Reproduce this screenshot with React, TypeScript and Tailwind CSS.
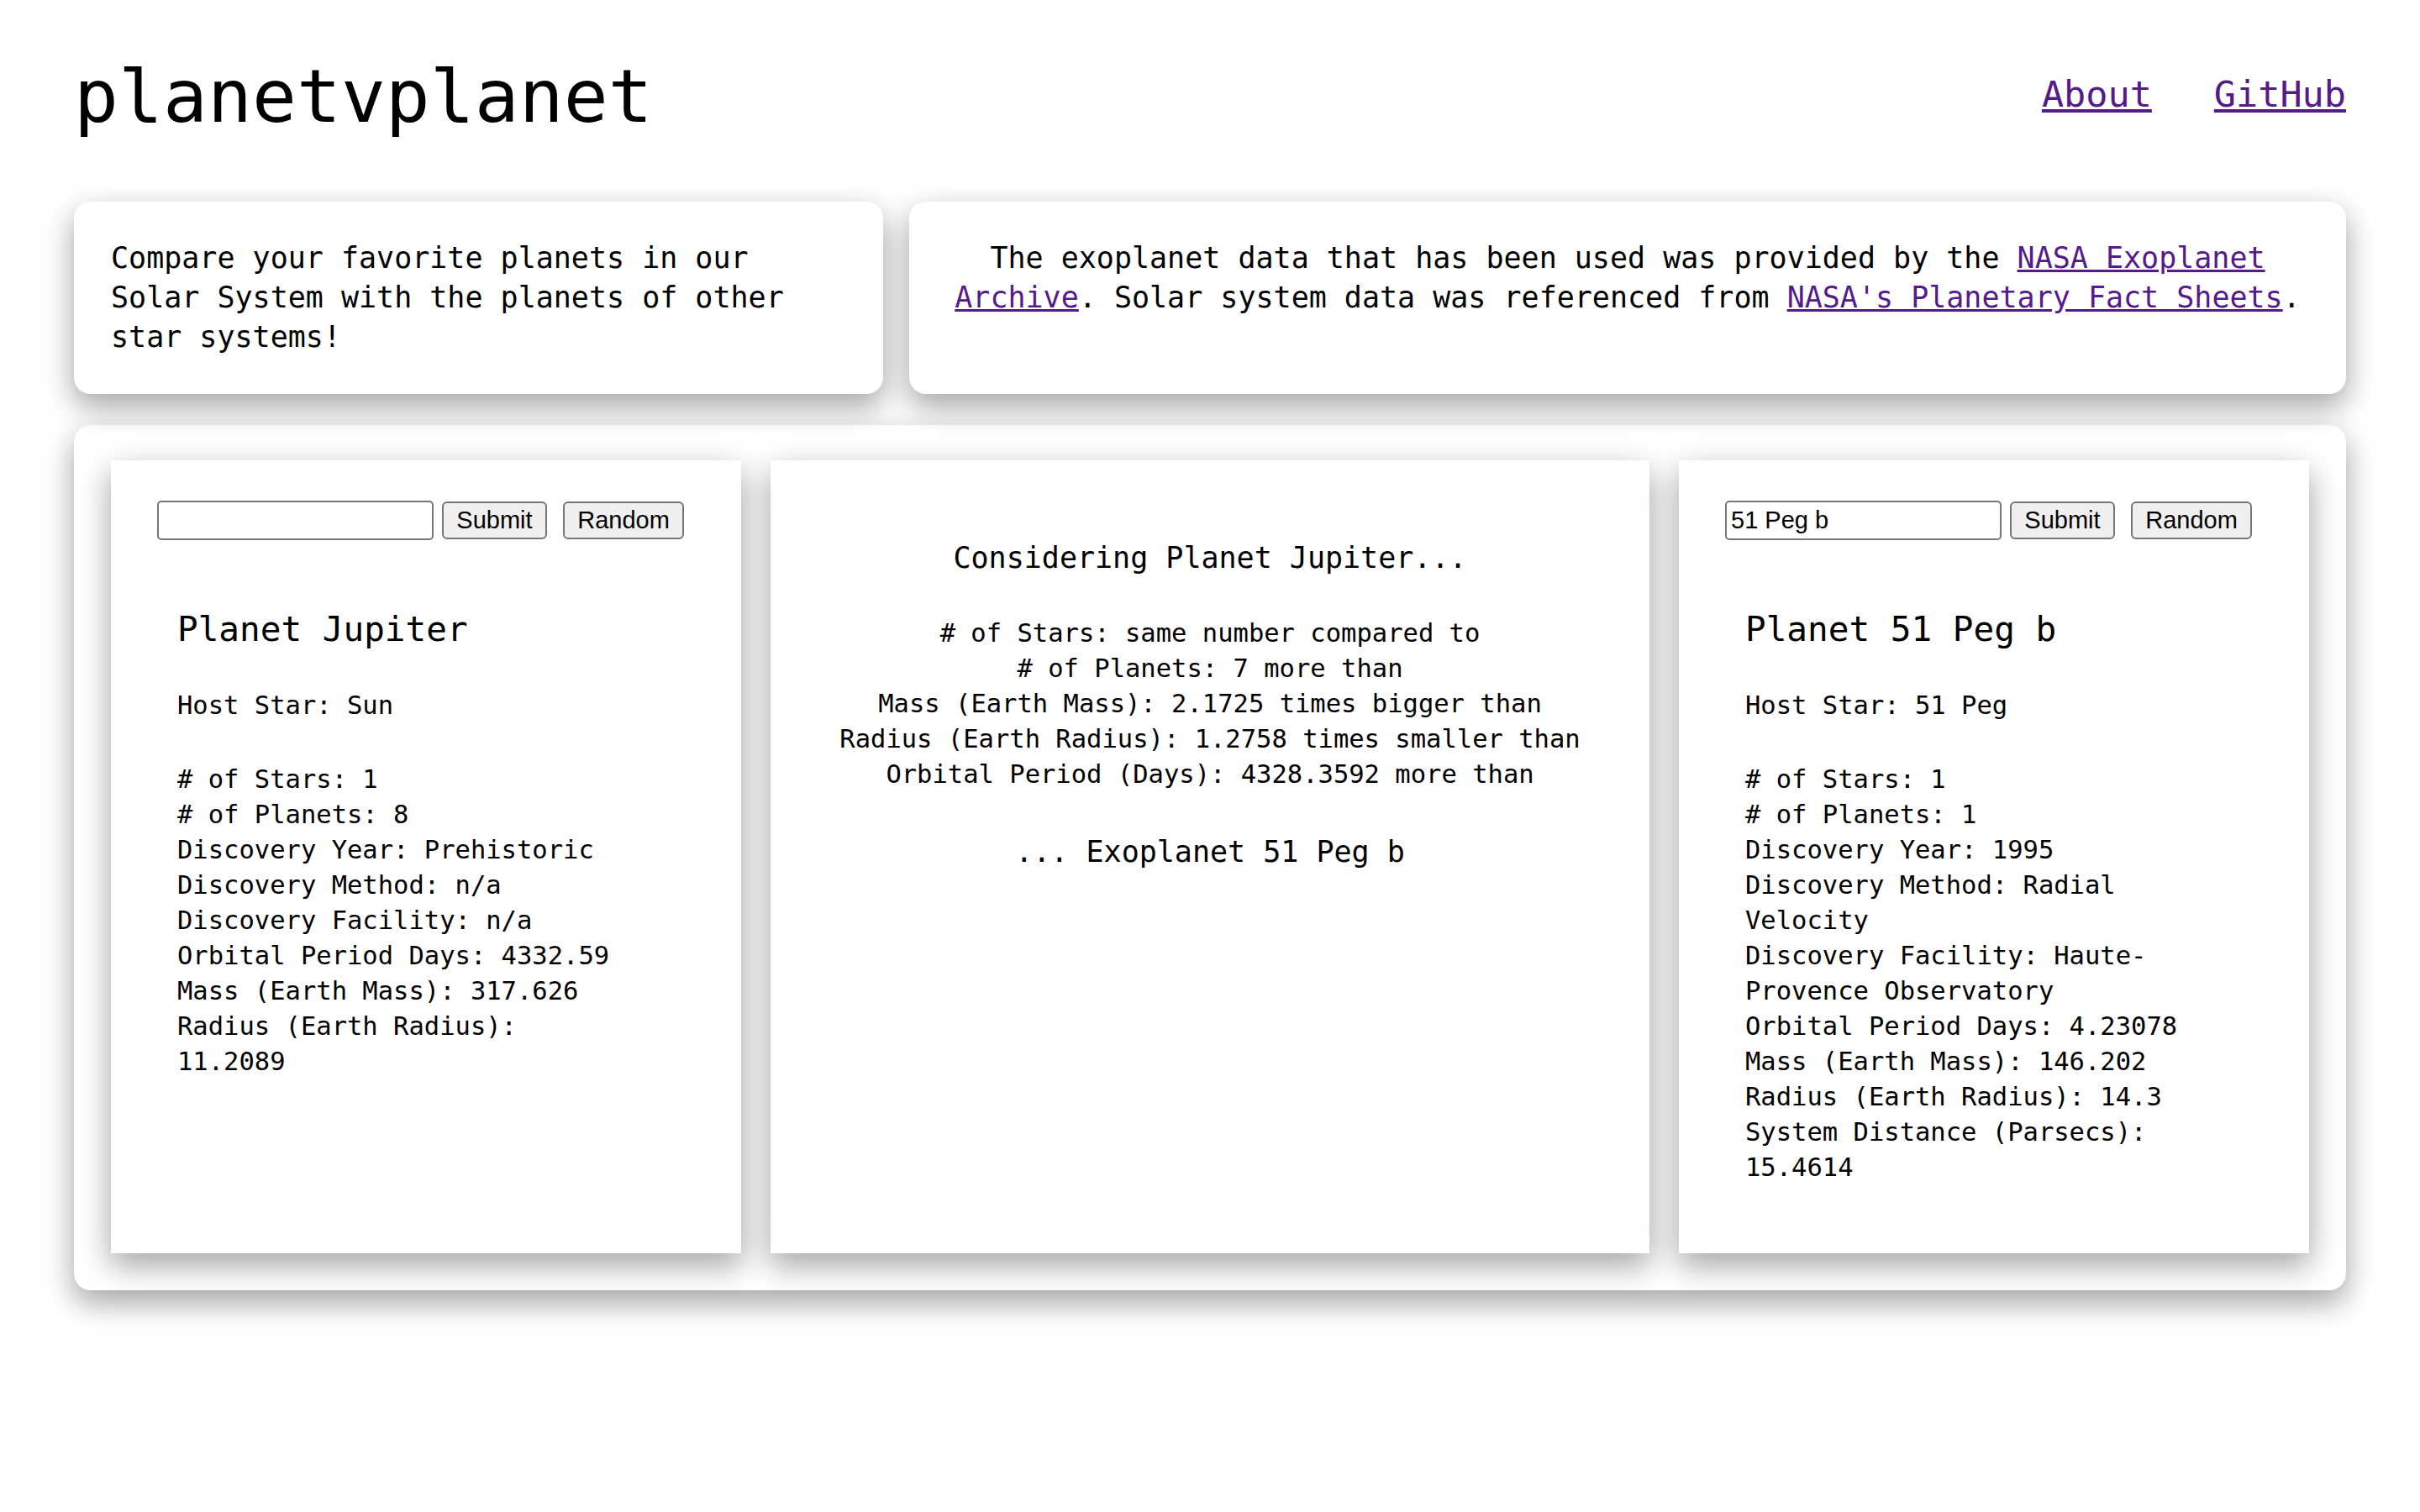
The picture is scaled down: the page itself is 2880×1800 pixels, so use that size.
import React from "react";

const SHADOW =
  "shadow-[0_16px_32px_0_rgba(0,0,0,0.2),0_12px_40px_0_rgba(0,0,0,0.19)]";

function SearchRow({ value }: { value: string }) {
  return (
    <div className="flex items-center font-['Liberation_Sans',Arial,sans-serif]">
      <input
        type="text"
        defaultValue={value}
        className="w-[329px] h-[47px] border-2 border-[#767676] rounded-[5px] px-[5px] text-[29px] leading-none text-black bg-white outline-none font-['Liberation_Sans',Arial,sans-serif]"
      />
      <button className="ml-[10px] h-[45px] w-[125px] border-2 border-[#767676] rounded-[6px] bg-[#efefef] text-[29px] leading-none text-black font-['Liberation_Sans',Arial,sans-serif]">
        Submit
      </button>
      <button className="ml-[19px] h-[45px] w-[144px] border-2 border-[#767676] rounded-[6px] bg-[#efefef] text-[29px] leading-none text-black font-['Liberation_Sans',Arial,sans-serif]">
        Random
      </button>
    </div>
  );
}

function PlanetPanel({
  value,
  name,
  host,
  lines,
}: {
  value: string;
  name: string;
  host: string;
  lines: string[];
}) {
  return (
    <div className={`h-[944px] bg-white pt-[48px] pl-[55px] ${SHADOW}`}>
      <SearchRow value={value} />
      <div className="ml-[24px] mt-[82px] w-[535px]">
        <h2 className="text-[41px] leading-[48px]">Planet {name}</h2>
        <p className="mt-[46px] text-[30.5px] leading-[42px]">Host Star: {host}</p>
        <div className="mt-[46px] text-[30.5px] leading-[42px]">
          {lines.map((l, i) => (
            <div key={i}>{l}</div>
          ))}
        </div>
      </div>
    </div>
  );
}

export default function App() {
  return (
    <div className="min-h-screen bg-white text-black px-[88px] pb-[200px] font-['DejaVu_Sans_Mono',monospace]">
      <header className="flex justify-between items-start pt-[71px]">
        <h1 className="text-[88px] leading-none h-[88px] font-normal">planetvplanet</h1>
        <nav className="flex gap-[74px] mt-[20px] text-[43.5px] leading-none">
          <a href="#" className="text-[#551a8b] underline">
            About
          </a>
          <a href="#" className="text-[#551a8b] underline">
            GitHub
          </a>
        </nav>
      </header>

      <div className="mt-[81px] grid grid-cols-[963px_1fr] gap-[31px]">
        <div className={`rounded-[20px] bg-white p-[44px] text-[35px] leading-[47px] ${SHADOW}`}>
          Compare your favorite planets in our Solar System with the planets of other star
          systems!
        </div>
        <div
          className={`rounded-[20px] bg-white p-[44px] text-[35px] leading-[47px] text-center ${SHADOW}`}
        >
          The exoplanet data that has been used was provided by the{" "}
          <a href="#" className="text-[#551a8b] underline">
            NASA Exoplanet Archive
          </a>
          . Solar system data was referenced from{" "}
          <a href="#" className="text-[#551a8b] underline">
            NASA's Planetary Fact Sheets
          </a>
          .
        </div>
      </div>

      <div
        className={`mt-[37px] rounded-[20px] bg-white pt-[42px] pb-[44px] px-[44px] grid grid-cols-[750px_1046px_750px] gap-[35px] ${SHADOW}`}
      >
        <PlanetPanel
          value=""
          name="Jupiter"
          host="Sun"
          lines={[
            "# of Stars: 1",
            "# of Planets: 8",
            "Discovery Year: Prehistoric",
            "Discovery Method: n/a",
            "Discovery Facility: n/a",
            "Orbital Period Days: 4332.59",
            "Mass (Earth Mass): 317.626",
            "Radius (Earth Radius): 11.2089",
          ]}
        />

        <div className={`h-[944px] bg-white pt-[93px] text-center ${SHADOW}`}>
          <h3 className="text-[35px] leading-[47px]">Considering Planet Jupiter...</h3>
          <div className="mt-[45px] text-[30.5px] leading-[42px]">
            <div># of Stars: same number compared to</div>
            <div># of Planets: 7 more than</div>
            <div>Mass (Earth Mass): 2.1725 times bigger than</div>
            <div>Radius (Earth Radius): 1.2758 times smaller than</div>
            <div>Orbital Period (Days): 4328.3592 more than</div>
          </div>
          <h3 className="mt-[48px] text-[35px] leading-[47px]">... Exoplanet 51 Peg b</h3>
        </div>

        <PlanetPanel
          value="51 Peg b"
          name="51 Peg b"
          host="51 Peg"
          lines={[
            "# of Stars: 1",
            "# of Planets: 1",
            "Discovery Year: 1995",
            "Discovery Method: Radial Velocity",
            "Discovery Facility: Haute-Provence Observatory",
            "Orbital Period Days: 4.23078",
            "Mass (Earth Mass): 146.202",
            "Radius (Earth Radius): 14.3",
            "System Distance (Parsecs): 15.4614",
          ]}
        />
      </div>
    </div>
  );
}
